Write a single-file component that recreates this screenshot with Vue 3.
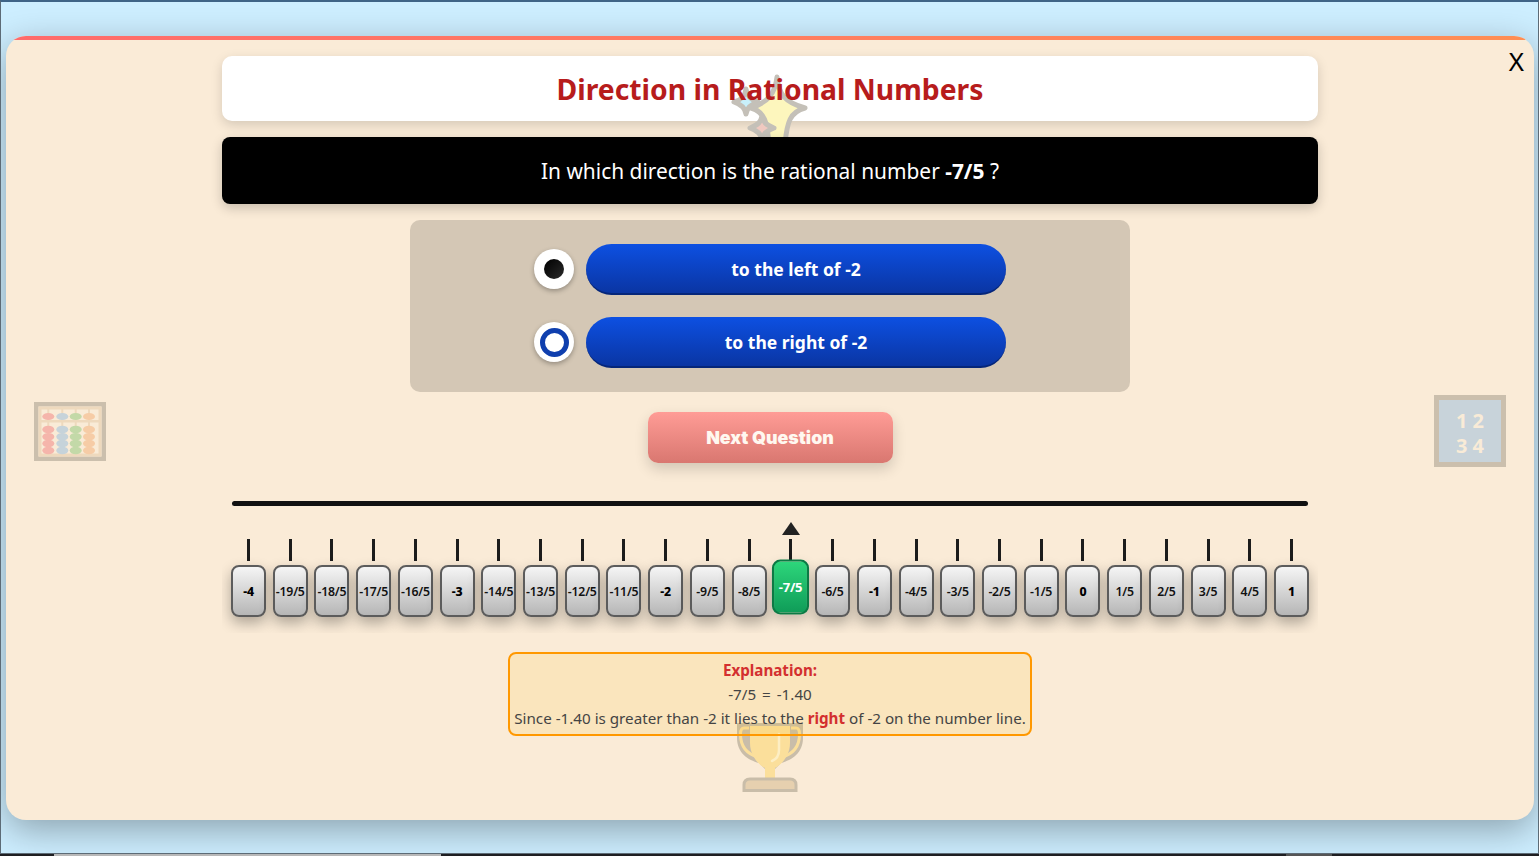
<script setup>
const labels = ['-4','-19/5','-18/5','-17/5','-16/5','-3','-14/5','-13/5','-12/5','-11/5','-2','-9/5','-8/5','-7/5','-6/5','-1','-4/5','-3/5','-2/5','-1/5','0','1/5','2/5','3/5','4/5','1']
const ticks = labels.map((label) => ({
  label,
  whole: !label.includes('/'),
  active: label === '-7/5'
}))
const columns = [48.3, 62.3, 75.7, 89]
const beadColors = ['#f5b5ab', '#c6d3da', '#c3d9a8', '#f6cca6']
const lowerRows = [429.5, 436.7, 443.5, 450.5]
</script>

<template>
  <div class="screen">
    <div class="frame">
      <main class="modal">
        <div class="strip"></div>
        <button class="close">X</button>

        <svg class="deco sparkles" viewBox="0 0 80 70" aria-hidden="true">
          <path d="M47 5C49 22 54 30 75 36C60 40 57 50 55 72H39C37 50 35 40 21 36C38 30 45 22 47 5Z" fill="#fdf6bd" stroke="#c4c0b8" stroke-width="5" stroke-linejoin="round"/>
          <path d="M16 17C17 24 20 28 28 30C20 33 17 36 16 42C15 36 12 33 4 30C12 28 15 24 16 17Z" fill="#c8f0fb" stroke="#c4c0b8" stroke-width="5" stroke-linejoin="round"/>
          <path d="M32 44C33 50 36 53 44 56C36 59 33 62 32 68C31 62 28 59 20 56C28 53 31 50 32 44Z" fill="#f0c9c0" stroke="#c4c0b8" stroke-width="5" stroke-linejoin="round"/>
        </svg>

        <svg class="deco abacus" viewBox="34 402 72 59" aria-hidden="true">
          <rect x="34" y="402" width="72" height="59" fill="#cbbfad"/>
          <rect x="38.5" y="406.5" width="63" height="50" fill="#f9ebd7"/>
          <rect x="40" y="408" width="60" height="47" fill="none" stroke="#eed9bd" stroke-width="3"/>
          <rect x="40" y="420" width="60" height="2.5" fill="#eed9bd"/>
          <g v-for="(x, i) in columns" :key="x">
            <rect :x="x - 1" y="408" width="2" height="47" fill="#eed9bd"/>
            <ellipse :cx="x" cy="416.5" rx="6" ry="3.6" :fill="beadColors[i]"/>
            <ellipse v-for="y in lowerRows" :key="y" :cx="x" :cy="y" rx="6" ry="3.8" :fill="beadColors[i]"/>
          </g>
        </svg>

        <div class="deco numbers" aria-hidden="true">
          <span>1 2</span>
          <span>3 4</span>
        </div>

        <svg class="deco trophy" viewBox="0 0 68 70" aria-hidden="true">
          <path d="M1 1H67V16C67 31 56 38 45 41L39 47V58H29V47L23 41C12 38 1 31 1 16Z" fill="#c9bda9"/>
          <path d="M13 6H8C6 6 4.500 8 4.500 12C4.500 24 11 32 22 35M55 6H60C62 6 63.500 8 63.500 12C63.500 24 57 32 46 35" fill="none" stroke="#fbdf9b" stroke-width="3"/>
          <path d="M14 4H54V21C54 34 45 43 39 46V58H29V46C23 43 14 34 14 21Z" fill="#fbdf9b"/>
          <path d="M43 12V28C43 33 41 37 36 39" fill="none" stroke="#fdeec4" stroke-width="2.5" stroke-linecap="round"/>
          <path d="M8 68.500V63C8 59 10 57 14 57H54C58 57 60 59 60 63V68.500Z" fill="#e6d0af" stroke="#c9bda9" stroke-width="3"/>
        </svg>

        <div class="content">
          <header class="title-card"><h1>Direction in Rational Numbers</h1></header>
          <section class="question">In which direction is the rational number <b>-7/5</b> ?</section>

          <section class="options">
            <div class="option">
              <span class="radio"><span class="dot"></span></span>
              <button class="answer">to the left of -2</button>
            </div>
            <div class="option">
              <span class="radio"><span class="ring"></span></span>
              <button class="answer">to the right of -2</button>
            </div>
          </section>

          <button class="next">Next Question</button>

          <div class="axis"></div>

          <div class="ruler">
            <div v-for="t in ticks" :key="t.label" class="col" :class="{ active: t.active }">
              <div class="marker"><span v-if="t.active" class="triangle"></span></div>
              <div class="tick"></div>
              <div class="chip" :class="{ whole: t.whole }">{{ t.label }}</div>
            </div>
          </div>

          <section class="explain">
            <div class="explain-title">Explanation:</div>
            <div class="equation">-7/5 = -1.40</div>
            <div>Since -1.40 is greater than -2 it lies to the <b>right</b> of -2 on the number line.</div>
          </section>
        </div>
      </main>
    </div>
    <div class="taskbar">
      <span class="seg-light"></span>
      <span class="seg-dark"></span>
    </div>
  </div>
</template>

<style>
html, body { margin: 0; overflow: hidden; }
</style>

<style scoped>
.screen {
  width: 1539px;
  height: 856px;
  display: flex;
  flex-direction: column;
  overflow: hidden;
  font-family: "Noto Sans", "Open Sans", sans-serif;
}
.frame {
  flex: 1;
  min-height: 0;
  box-sizing: border-box;
  background: #cdeeff;
  border-top: 2px solid #3f6487;
  border-left: 1px solid #5d6b76;
  border-right: 1px solid #5d6b76;
  border-bottom: 1px solid #5d6b76;
  padding: 34px 4px 0 5px;
  overflow: hidden;
}
.taskbar {
  height: 2px;
  flex: none;
  background: #1f1f22;
  display: flex;
}
.seg-light { width: 387px; margin-left: 54px; background: #b8b8b8; }
.seg-dark { width: 46px; margin-left: 845px; background: #555; }
.modal {
  position: relative;
  height: 784px;
  background: #faebd7;
  border-radius: 20px;
  overflow: hidden;
  box-shadow: 0 10px 36px rgba(0, 0, 0, 0.32);
}
.strip {
  height: 4px;
  background: linear-gradient(90deg, #ff6b6b, #ff8e53);
}
.close {
  position: absolute;
  top: 9px;
  right: 10px;
  padding: 0;
  border: 0;
  background: none;
  font: 400 26px/32px "Noto Sans", sans-serif;
  color: #000;
  z-index: 5;
}
.deco { position: absolute; }
.sparkles { left: 724px; top: 36px; width: 80px; height: 70px; z-index: 1; }
.abacus { left: 28px; top: 366px; width: 72px; height: 59px; }
.trophy { left: 730px; top: 686px; width: 68px; height: 70px; z-index: 3; }
.numbers {
  left: 1428px;
  top: 359px;
  width: 72px;
  height: 72px;
  box-sizing: border-box;
  border: 5px solid #cbbfad;
  padding-top: 4px;
  background: #c8d3da;
  color: #f9ebd7;
  font: 700 20px/25px "Noto Sans", sans-serif;
  display: flex;
  flex-direction: column;
  align-items: center;
  justify-content: center;
}
.content {
  width: 1096px;
  margin: 0 auto;
  padding-top: 16px;
  display: flex;
  flex-direction: column;
  align-items: center;
}
.title-card {
  width: 100%;
  height: 65px;
  background: #fff;
  border-radius: 10px;
  box-shadow: 0 4px 12px rgba(0, 0, 0, 0.15);
  display: flex;
  align-items: center;
  justify-content: center;
}
h1 {
  margin: 0;
  font-size: 28.3px;
  font-weight: 700;
  color: #b71c1c;
  position: relative;
  z-index: 2;
}
.question {
  position: relative;
  z-index: 2;
  width: 100%;
  height: 67px;
  margin-top: 16px;
  background: #000;
  color: #fff;
  border-radius: 8px;
  box-shadow: 0 4px 12px rgba(0, 0, 0, 0.2);
  font-size: 20.9px;
  display: flex;
  align-items: center;
  justify-content: center;
  white-space: pre-wrap;
}
.options {
  width: 720px;
  height: 172px;
  box-sizing: border-box;
  margin-top: 16px;
  padding: 24px 0;
  background: #d4c7b5;
  border-radius: 10px;
  display: flex;
  flex-direction: column;
  align-items: center;
  gap: 22px;
}
.option { display: flex; align-items: center; gap: 12px; }
.radio {
  width: 40px;
  height: 40px;
  margin-bottom: 1px;
  border-radius: 50%;
  background: #fff;
  box-shadow: 0 2px 5px rgba(0, 0, 0, 0.3);
  display: flex;
  align-items: center;
  justify-content: center;
}
.dot {
  width: 20px;
  height: 20px;
  border-radius: 50%;
  background: linear-gradient(135deg, #000, #2a2a2a);
}
.ring {
  width: 29px;
  height: 29px;
  box-sizing: border-box;
  border-radius: 50%;
  border: 5px solid #0f3fae;
}
.answer {
  width: 420px;
  height: 51px;
  box-sizing: border-box;
  border: 0;
  border-bottom: 2px solid #05267a;
  border-radius: 26px;
  background: linear-gradient(180deg, #0d50e2, #0a35a3);
  color: #fff;
  font: 700 17.5px "Noto Sans", sans-serif;
  padding: 1px 0 0;
}
.next {
  width: 245px;
  height: 51px;
  margin-top: 20px;
  border: 0;
  border-radius: 10px;
  background: linear-gradient(180deg, #ff9c96, #d97770);
  color: #fff8f0;
  font: 900 17.8px "Inter", "Noto Sans", sans-serif;
  box-shadow: 0 6px 14px rgba(0, 0, 0, 0.16);
  padding: 0;
}
.axis {
  width: 1076px;
  height: 5px;
  margin-top: 38px;
  border-radius: 3px;
  background: #111;
}
.ruler {
  width: 100%;
  box-sizing: border-box;
  margin-top: 15px;
  padding: 0 9px 16px;
  display: flex;
  justify-content: space-between;
  overflow: hidden;
}
.col {
  width: 35px;
  display: flex;
  flex-direction: column;
  align-items: center;
}
.marker {
  height: 18px;
  display: flex;
  justify-content: center;
  align-items: flex-start;
}
.triangle {
  margin-top: 1px;
  width: 0;
  height: 0;
  border-left: 9px solid transparent;
  border-right: 9px solid transparent;
  border-bottom: 13px solid #222;
}
.tick {
  width: 3px;
  height: 22px;
  background: #1c1c1c;
}
.chip {
  width: 35px;
  height: 52px;
  box-sizing: border-box;
  margin-top: 4px;
  border: 2px solid #5c5c5c;
  border-radius: 8px;
  background: linear-gradient(180deg, #f5f5f5, #b6b6b6);
  box-shadow: 0 6px 14px rgba(0, 0, 0, 0.3);
  color: #111;
  font-size: 12.3px;
  font-weight: 600;
  letter-spacing: -0.2px;
  white-space: nowrap;
  display: flex;
  align-items: center;
  justify-content: center;
}
.chip.whole { font-weight: 800; color: #000; }
.col.active { position: relative; z-index: 1; }
.active .chip {
  transform: translateY(-4px) scale(1.06);
  background: linear-gradient(180deg, #2dd67b, #0f9c58);
  border-color: #0c7a45;
  color: #fff;
  font-weight: 700;
  box-shadow: 0 6px 12px rgba(0, 0, 0, 0.2);
}
.explain {
  position: relative;
  z-index: 4;
  width: 524px;
  box-sizing: border-box;
  margin-top: 19px;
  border: 2px solid #ff9800;
  border-radius: 8px;
  background: rgba(255, 193, 7, 0.12);
  color: #444;
  font-size: 15.2px;
  line-height: 24px;
  text-align: center;
  padding: 4px 0;
  white-space: nowrap;
}
.equation { word-spacing: 2px; }
.explain-title { color: #d32f2f; font-weight: 700; }
.explain b { color: #d32f2f; }
</style>
